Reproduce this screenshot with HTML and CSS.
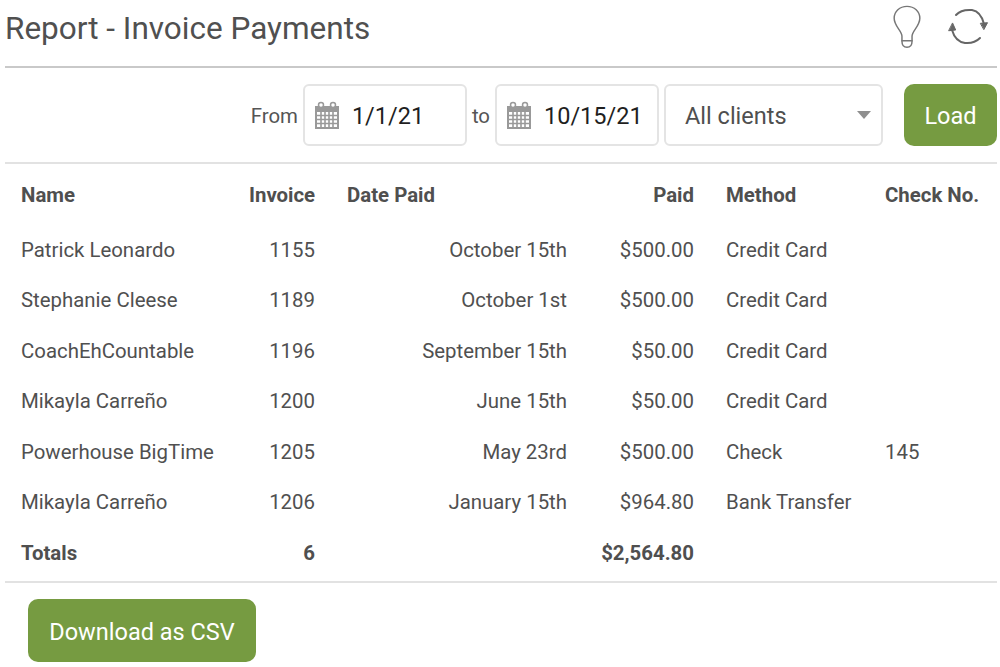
FILE: index.html
```html
<!DOCTYPE html>
<html lang="en">
<head>
<meta charset="utf-8">
<title>Report - Invoice Payments</title>
<link rel="stylesheet" href="styles.css">
</head>
<body>
<div class="page">
  <header class="top">
    <h1 class="title">Report - Invoice Payments</h1>
    <div class="top-icons">
      <svg class="bulb" width="30" height="44" viewBox="0 0 32 48" fill="none" stroke="#777" stroke-width="1.6" stroke-linecap="round" stroke-linejoin="round">
        <path d="M10.500 39.500 V34 C10.500 28.500 2 23 2 14.500 C2 7 8 1.500 16 1.500 C24 1.500 30 7 30 14.500 C30 23 21.500 28.500 21.500 34 V39.500 C21.500 44 19.500 46 16 46 C12.500 46 10.500 44 10.500 39.500 Z"/>
        <path d="M10.500 39 H21.500"/>
      </svg>
      <svg class="sync" width="40" height="40" viewBox="0 0 40 40" fill="none" stroke="#666" stroke-width="2" stroke-linecap="round">
        <path d="M8 8 C12 3.500 18 2.500 24 3 C30 4 34 9 36 17"/>
        <path d="M32 31 C28 35 22 36.500 17 36 C10 35 6 30 4 23"/>
        <path d="M32.700 16.300 L39.500 15.700 L36 22.300 Z" fill="#666" stroke-width="1"/>
        <path d="M1 23.700 L7.700 23 L4.700 16.300 Z" fill="#666" stroke-width="1"/>
      </svg>
    </div>
  </header>

  <div class="filters">
    <span class="label label-from">From</span>
    <div class="field date">
      <svg class="cal" width="26" height="28" viewBox="0 0 26 28">
        <path d="M1 5 H25 V28 H1 Z" fill="#999"/>
        <circle cx="7" cy="4" r="2.500" fill="#fff" stroke="#999" stroke-width="1.500"/>
        <circle cx="19" cy="4" r="2.500" fill="#fff" stroke="#999" stroke-width="1.500"/>
        <path d="M3 11 H23 V26 H3 Z" fill="#fff"/>
        <path d="M3 14.500 H23 M3 18.500 H23 M3 22.500 H23 M7 11 V26 M11 11 V26 M15 11 V26 M19 11 V26" stroke="#999" stroke-width="1.600"/>
      </svg>
      <span class="date-value">1/1/21</span>
    </div>
    <span class="label label-to">to</span>
    <div class="field date">
      <svg class="cal" width="26" height="28" viewBox="0 0 26 28">
        <path d="M1 5 H25 V28 H1 Z" fill="#999"/>
        <circle cx="7" cy="4" r="2.500" fill="#fff" stroke="#999" stroke-width="1.500"/>
        <circle cx="19" cy="4" r="2.500" fill="#fff" stroke="#999" stroke-width="1.500"/>
        <path d="M3 11 H23 V26 H3 Z" fill="#fff"/>
        <path d="M3 14.500 H23 M3 18.500 H23 M3 22.500 H23 M7 11 V26 M11 11 V26 M15 11 V26 M19 11 V26" stroke="#999" stroke-width="1.600"/>
      </svg>
      <span class="date-value">10/15/21</span>
    </div>
    <div class="field select">
      <span>All clients</span>
      <span class="caret"></span>
    </div>
    <button class="btn btn-load" type="button">Load</button>
  </div>

  <table class="report">
    <colgroup>
      <col class="c-name"><col class="c-inv"><col class="c-date"><col class="c-paid"><col class="c-method"><col class="c-check">
    </colgroup>
    <thead>
      <tr>
        <th>Name</th><th class="r">Invoice</th><th>Date Paid</th><th class="r">Paid</th><th>Method</th><th>Check No.</th>
      </tr>
    </thead>
    <tbody>
      <tr><td>Patrick Leonardo</td><td class="r">1155</td><td class="r">October 15th</td><td class="r">$500.00</td><td>Credit Card</td><td></td></tr>
      <tr><td>Stephanie Cleese</td><td class="r">1189</td><td class="r">October 1st</td><td class="r">$500.00</td><td>Credit Card</td><td></td></tr>
      <tr><td>CoachEhCountable</td><td class="r">1196</td><td class="r">September 15th</td><td class="r">$50.00</td><td>Credit Card</td><td></td></tr>
      <tr><td>Mikayla Carreño</td><td class="r">1200</td><td class="r">June 15th</td><td class="r">$50.00</td><td>Credit Card</td><td></td></tr>
      <tr><td>Powerhouse BigTime</td><td class="r">1205</td><td class="r">May 23rd</td><td class="r">$500.00</td><td>Check</td><td>145</td></tr>
      <tr><td>Mikayla Carreño</td><td class="r">1206</td><td class="r">January 15th</td><td class="r">$964.80</td><td>Bank Transfer</td><td></td></tr>
    </tbody>
    <tfoot>
      <tr><th>Totals</th><th class="r">6</th><th></th><th class="r">$2,564.80</th><th></th><th></th></tr>
    </tfoot>
  </table>

  <div class="actions">
    <button class="btn btn-csv" type="button">Download as CSV</button>
  </div>
</div>
</body>
</html>
```
FILE: styles.css
```css
* { box-sizing: border-box; }
html, body { margin: 0; background: #fff; }
body {
  font-family: Roboto, "Liberation Sans", sans-serif;
  color: #4a4a4a;
  height: 667px;
  overflow: hidden;
}
.page { padding: 0 3px 0 5px; }
.top {
  display: flex;
  justify-content: space-between;
  align-items: flex-start;
  height: 68px;
  border-bottom: 2px solid #c9c9c9;
}
.title {
  margin: 9px 0 0;
  font-size: 31.500px;
  line-height: 40px;
  font-weight: 400;
  color: #505050;
}
.top-icons { display: flex; gap: 26px; padding: 5px 9px 0 0; align-items: flex-start; }
.sync { margin-top: 2px; overflow: visible; }
.filters {
  display: flex;
  justify-content: flex-end;
  align-items: center;
  height: 96px;
  border-bottom: 2px solid #e2e2e2;
  font-size: 20px;
}
.label { color: #555; font-size: 20.400px; padding-top: 2px; }
.label-from { margin-right: 5px; }
.label-to { margin: 0 5px; }
.field {
  height: 62px;
  background: #fff;
  border: 2px solid #e4e4e4;
  border-radius: 6px;
  display: flex;
  align-items: center;
}
.date { padding-left: 9px; width: 164px; }
.cal { flex: none; margin-right: 12px; }
.date-value { color: #1f1f1f; font-size: 23.500px; padding-top: 2px; }
.select {
  width: 219px;
  margin-left: 5px;
  padding: 2px 10px 0 19px;
  justify-content: space-between;
  font-size: 23.500px;
  color: #4f4f4f;
}
.caret {
  width: 0;
  height: 0;
  border-left: 7px solid transparent;
  border-right: 7px solid transparent;
  border-top: 8px solid #8f8f8f;
  margin-top: -2px;
}
.btn {
  border: 0;
  background: #769b41;
  color: #fff;
  font-family: inherit;
  font-size: 23.500px;
  border-radius: 10px;
  height: 62px;
  padding-top: 3px;
}
.btn-load { width: 93px; margin-left: 21px; }
.report {
  width: 100%;
  table-layout: fixed;
  border-collapse: collapse;
  font-size: 20.400px;
  border-bottom: 2px solid #e2e2e2;
}
.c-name { width: 228px; }
.c-inv { width: 98px; }
.c-date { width: 252px; }
.c-paid { width: 127px; }
.c-method { width: 159px; }
.report th, .report td {
  padding: 0 16px;
  text-align: left;
  white-space: nowrap;
  height: 50.500px;
}
.report th { font-weight: 700; color: #4f4f4f; }
.report thead th { height: 60.500px; padding-top: 1px; }
.report tfoot th { height: 54.500px; padding-bottom: 3px; }
.report .r { text-align: right; }
.report td { color: #505050; }
.actions { padding: 16px 0 0 23px; }
.btn-csv { width: 228px; height: 63px; }
```
